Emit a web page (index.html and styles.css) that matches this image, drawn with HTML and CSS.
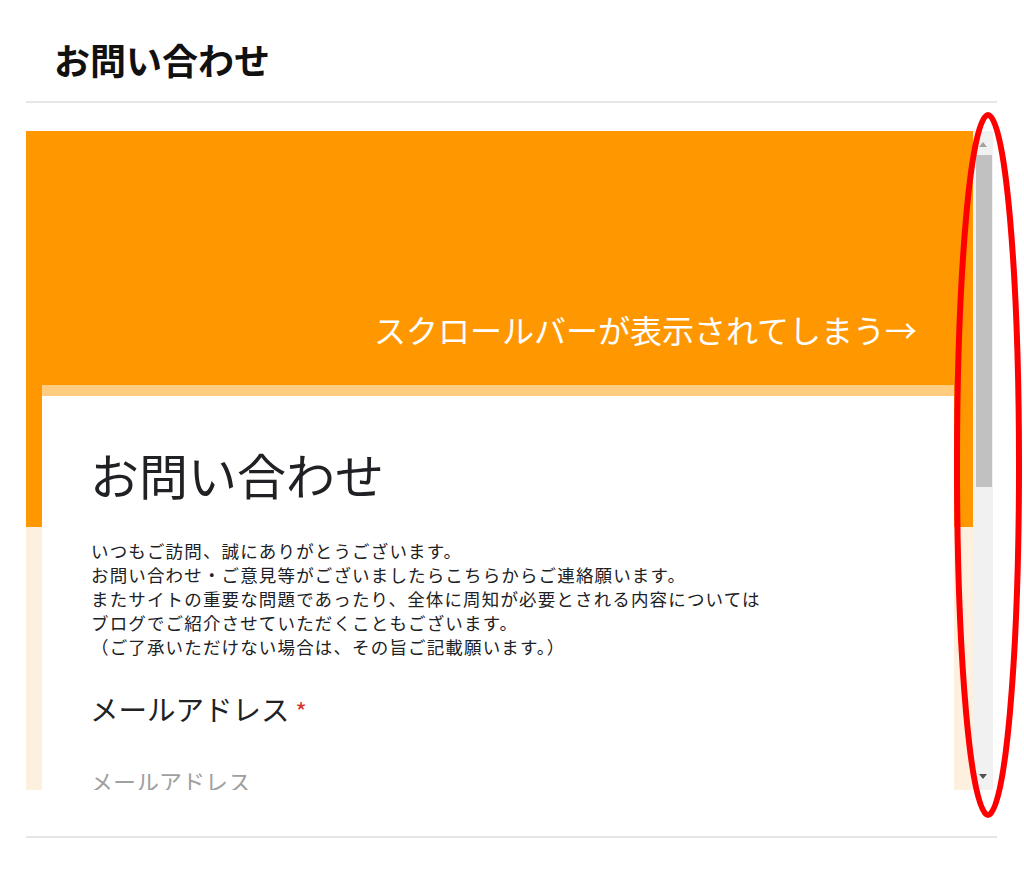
FILE: index.html
```html
<!DOCTYPE html>
<html lang="ja">
<head>
<meta charset="utf-8">
<title>お問い合わせ</title>
<link rel="stylesheet" href="styles.css">
</head>
<body>
<div class="page">
  <h1 class="page-title">お問い合わせ</h1>
  <div class="frame">
    <div class="viewport">
      <div class="banner">
        <p class="banner-text">スクロールバーが表示されてしまう→</p>
      </div>
      <div class="card">
        <h2 class="form-title">お問い合わせ</h2>
        <p class="form-desc">いつもご訪問、誠にありがとうございます。<br>お問い合わせ・ご意見等がございましたらこちらからご連絡願います。<br>またサイトの重要な問題であったり、全体に周知が必要とされる内容については<br>ブログでご紹介させていただくこともございます。<br>（ご了承いただけない場合は、その旨ご記載願います。）</p>
        <div class="field-label">メールアドレス<span class="req">*</span></div>
        <div class="field-input">メールアドレス</div>
      </div>
    </div>
    <div class="scrollbar">
      <div class="sb-btn"><span class="tri-up"></span></div>
      <div class="sb-track"><div class="sb-thumb"></div></div>
      <div class="sb-btn"><span class="tri-down"></span></div>
    </div>
  </div>
  <div class="bottom-rule"></div>
  <svg class="annotation" width="80" height="720" viewBox="0 0 80 720">
    <ellipse cx="40" cy="355" rx="31" ry="350" fill="none" stroke="#ff0000" stroke-width="6"/>
  </svg>
</div>
</body>
</html>
```
FILE: styles.css
```css
html, body {
  margin: 0;
  padding: 0;
  background: #ffffff;
}

body {
  font-family: "Noto Sans CJK JP", "Noto Sans", sans-serif;
  color: #202124;
}

.page {
  position: relative;
  width: 971px;
  padding-left: 26px;
  height: 896px;
}

.page-title {
  margin: 0;
  padding: 36px 0 19px 28px;
  font-size: 36px;
  line-height: 46px;
  font-weight: 700;
  color: #111111;
  border-bottom: 2px solid #e6e6e6;
}

.frame {
  margin-top: 28px;
  height: 659px;
  display: flex;
}

.viewport {
  width: 947px;
  overflow: hidden;
  background: #fdf0de;
}

.banner {
  height: 396px;
  background: #ff9800;
  padding-top: 178px;
  box-sizing: border-box;
}

.banner-text {
  margin: 0;
  text-align: right;
  padding-right: 56px;
  color: #ffffff;
  font-size: 32px;
  line-height: 40px;
  font-weight: 400;
}

.card {
  margin: -142px 19px 0 16px;
  background: #ffffff;
  border-top: 11px solid #ffcc80;
  padding: 47px 47px 40px 48px;
  height: 600px;
}

.form-title {
  margin: 0;
  font-size: 49px;
  line-height: 62px;
  font-weight: 400;
  color: #202124;
}

.form-desc {
  margin: 34px 0 0 1px;
  font-size: 17.5px;
  line-height: 24px;
  letter-spacing: 1.15px;
  color: #202124;
}

.field-label {
  margin-top: 32px;
  font-size: 28.5px;
  line-height: 36px;
  color: #202124;
}

.req {
  color: #d93025;
  margin-left: 6px;
  font-size: 24px;
}

.field-input {
  margin-top: 37px;
  font-size: 23px;
  line-height: 30px;
  color: #a0a0a0;
}

.scrollbar {
  width: 20px;
  background: #f1f1f1;
  display: flex;
  flex-direction: column;
}

.sb-btn {
  height: 20px;
  display: flex;
  align-items: center;
  justify-content: center;
}

.tri-up {
  width: 0;
  height: 0;
  border-left: 4px solid transparent;
  border-right: 4px solid transparent;
  border-bottom: 5px solid #a3a3a3;
  margin-top: 6px;
}

.tri-down {
  width: 0;
  height: 0;
  border-left: 4px solid transparent;
  border-right: 4px solid transparent;
  border-top: 5px solid #505050;
  margin-bottom: 8px;
}

.sb-track {
  flex: 1;
  padding: 4px 1px 0 3px;
}

.sb-thumb {
  height: 332px;
  background: #c1c1c1;
}

.bottom-rule {
  margin-top: 46px;
  height: 2px;
  background: #e6e6e6;
}

.annotation {
  position: absolute;
  left: 948px;
  top: 110px;
}
```
